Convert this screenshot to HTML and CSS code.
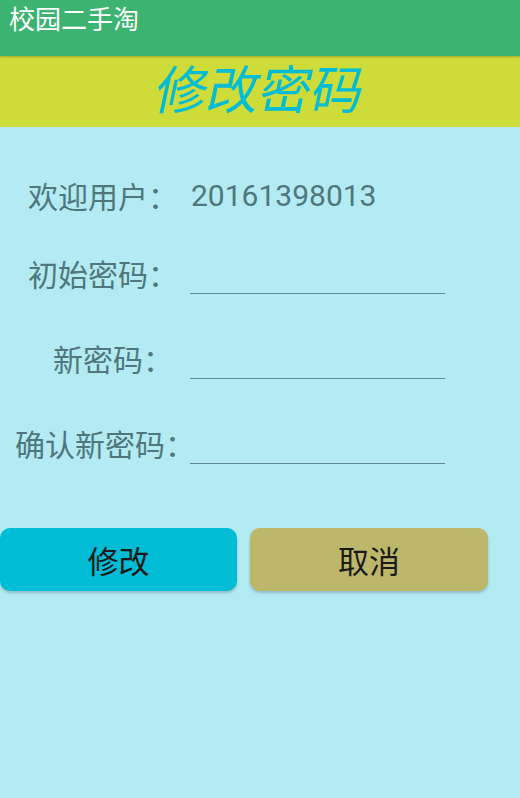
FILE: index.html
```html
<!DOCTYPE html>
<html lang="zh-CN">
<head>
<meta charset="utf-8">
<title>修改密码</title>
<link rel="stylesheet" href="styles.css">
</head>
<body>
<div class="topbar">校园二手淘</div>
<div class="header"><h1 class="title">修改密码</h1></div>
<main class="content">
  <div class="row row-welcome">
    <span class="label label-welcome">欢迎用户：</span>
    <span class="value">20161398013</span>
  </div>
  <div class="row">
    <span class="label label-old">初始密码：</span>
    <span class="field"></span>
  </div>
  <div class="row">
    <span class="label label-new">新密码：</span>
    <span class="field"></span>
  </div>
  <div class="row">
    <span class="label label-confirm">确认新密码：</span>
    <span class="field"></span>
  </div>
  <div class="buttons">
    <button class="btn btn-ok">修改</button>
    <button class="btn btn-cancel">取消</button>
  </div>
</main>
</body>
</html>
```
FILE: styles.css
```css
html, body {
  margin: 0;
  padding: 0;
}
body {
  width: 520px;
  height: 798px;
  background: #b2ebf2;
  font-family: Roboto, "Noto Sans CJK SC", sans-serif;
  overflow: hidden;
}
.topbar {
  height: 56px;
  background: #3cb371;
  color: #ffffff;
  font-size: 26px;
  line-height: 40px;
  padding-left: 9px;
  box-shadow: 0 1px 2px rgba(0,0,0,0.25);
  position: relative;
  z-index: 1;
}
.header {
  height: 71px;
  background: #cddc39;
  display: flex;
  justify-content: center;
  align-items: center;
}
.title {
  margin: 0;
  font-size: 52px;
  font-weight: normal;
  font-style: normal;
  color: #00bcd4;
  line-height: 62px;
  transform: skewX(-12deg);
}
.content {
  padding-top: 35px;
}
.row {
  display: flex;
  align-items: center;
  height: 85px;
  color: #4f777c;
  font-size: 30px;
}
.row-welcome {
  height: 70px;
}
.label {
  width: 190px;
  box-sizing: border-box;
  white-space: nowrap;
  font-family: "Noto Sans CJK SC", sans-serif;
  padding-bottom: 4px;
}
.label-welcome, .label-old { padding-left: 28px; }
.label-new { padding-left: 53px; }
.label-confirm { padding-left: 15px; }
.value {
  font-family: Roboto, sans-serif;
  padding-left: 1px;
  padding-bottom: 4px;
}
.field {
  width: 255px;
  height: 36px;
  border-bottom: 1px solid #5f8a8b;
  margin-top: 1px;
}
.buttons {
  display: flex;
  gap: 13px;
  margin-top: 41px;
}
.btn {
  width: 237px;
  height: 63px;
  border: none;
  border-radius: 10px;
  font-family: "Noto Sans CJK SC", sans-serif;
  font-size: 31px;
  color: #1a1a1a;
  box-shadow: 0 2px 3px rgba(0,0,0,0.2);
  padding: 0;
}
.btn-ok { background: #00bcd4; }
.btn-cancel { background: #bdb76b; width: 238px; }
```
